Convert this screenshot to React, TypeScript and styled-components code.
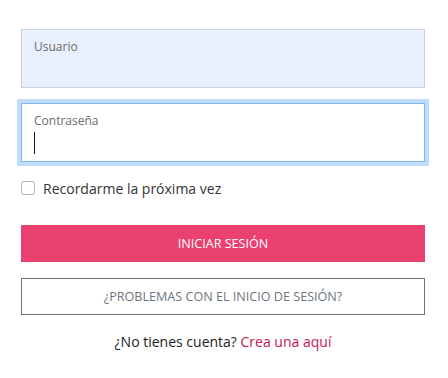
import styled, { createGlobalStyle } from "styled-components";

const Global = createGlobalStyle`
  body { margin: 0; background: #fff; font-family: 'Open Sans', 'Liberation Sans', sans-serif; }
`;

const Form = styled.form`
  width: 404px;
  margin-left: 21px;
  padding-top: 29px;
  display: flex;
  flex-direction: column;
`;

const Field = styled.label<{ $focused?: boolean; $filled?: boolean }>`
  box-sizing: border-box;
  height: 59px;
  display: flex;
  flex-direction: column;
  padding: 9px 12px 0;
  border: 1px solid ${({ $focused }) => ($focused ? "#80b4f2" : "#ccd3dc")};
  background: ${({ $filled }) => ($filled ? "#e8f0fe" : "#fff")};
  box-shadow: ${({ $focused }) => ($focused ? "0 0 0 4px #c0dcfb" : "none")};
  margin-bottom: 15px;

  span {
    font-size: 12px;
    line-height: 16px;
    color: #6b6b6b;
  }
`;

const Caret = styled.i`
  display: block;
  width: 1px;
  height: 22px;
  margin-top: 3px;
  background: #111;
`;

const Check = styled.label`
  display: flex;
  align-items: center;
  gap: 8px;
  margin-top: 1px;
  font-size: 14px;
  color: #333;
  height: 20px;

  i {
    box-sizing: border-box;
    width: 14px;
    height: 14px;
    border: 1px solid #b5b5b5;
    border-radius: 3px;
    background: #fff;
  }
`;

const Button = styled.button<{ $outline?: boolean }>`
  box-sizing: border-box;
  height: 37px;
  width: 100%;
  border: 1px solid ${({ $outline }) => ($outline ? "#6c737b" : "#ea4171")};
  background: ${({ $outline }) => ($outline ? "#fff" : "#ea4171")};
  color: ${({ $outline }) => ($outline ? "#6c7680" : "#fff")};
  font-family: 'Open Sans', 'Liberation Sans', sans-serif;
  font-size: 12.6px;
  padding: 0;
  margin-top: ${({ $outline }) => ($outline ? "16px" : "27px")};
`;

const Footer = styled.p`
  margin: 17px 0 0;
  text-align: center;
  font-size: 14px;
  color: #222;

  a { color: #c8174f; text-decoration: none; }
`;

export default function App() {
  return (
    <>
      <Global />
      <Form onSubmit={(e) => e.preventDefault()}>
        <Field $filled>
          <span>Usuario</span>
        </Field>
        <Field $focused>
          <span>Contraseña</span>
          <Caret />
        </Field>
        <Check>
          <i />
          Recordarme la próxima vez
        </Check>
        <Button>INICIAR SESIÓN</Button>
        <Button $outline type="button">¿PROBLEMAS CON EL INICIO DE SESIÓN?</Button>
        <Footer>
          ¿No tienes cuenta? <a href="#">Crea una aquí</a>
        </Footer>
      </Form>
    </>
  );
}
